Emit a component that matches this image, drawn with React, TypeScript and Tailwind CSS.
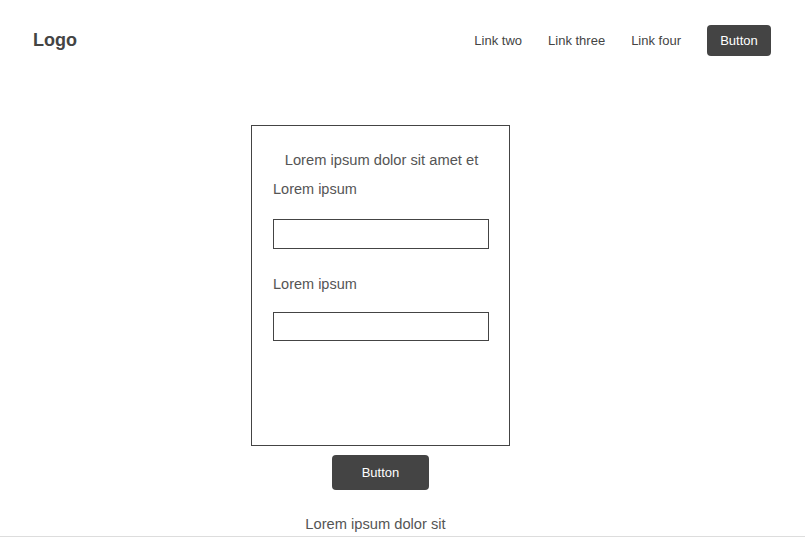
import type { FC } from "react";

const NavLink: FC<{ label: string }> = ({ label }) => (
    <a href="#" className="text-[13px] text-[#444]">
        {label}
    </a>
);

const Field: FC<{ label: string; className?: string }> = ({ label, className }) => (
    <div className={className}>
        <label className="block text-[14.5px] leading-[20px] text-[#555]">{label}</label>
    </div>
);

export default function App() {
    return (
        <div
            className="min-h-[537px] bg-white"
            style={{ fontFamily: '"Liberation Sans", Arial, sans-serif' }}
        >
            <header className="flex items-center justify-between h-[81px] pl-[33px] pr-[34px]">
                <span className="text-[18px] font-bold text-[#444]">Logo</span>
                <nav className="flex items-center gap-[26px]">
                    <NavLink label="Link two" />
                    <NavLink label="Link three" />
                    <NavLink label="Link four" />
                    <button className="w-[64px] h-[31px] rounded-[4px] bg-[#444] text-white text-[13px]">
                        Button
                    </button>
                </nav>
            </header>

            <main className="ml-[251px] w-[259px] mt-[44px] flex flex-col items-center">
                <form className="w-full h-[321px] border border-[#444] pt-[24px] px-[21px]">
                    <h1 className="text-center text-[14.7px] leading-[20px] text-[#555] pl-[2px] whitespace-nowrap">
                        Lorem ipsum dolor sit amet et
                    </h1>
                    <Field label="Lorem ipsum" className="mt-[9px]" />
                    <input
                        type="text"
                        className="mt-[20px] block w-[216px] h-[30px] border border-[#444] bg-white"
                    />
                    <Field label="Lorem ipsum" className="mt-[25px]" />
                    <input
                        type="text"
                        className="mt-[18px] block w-[216px] h-[29px] border border-[#444] bg-white"
                    />
                </form>
                <button
                    type="submit"
                    className="mt-[9px] w-[97px] h-[35px] rounded-[4px] bg-[#444] text-white text-[13px]"
                >
                    Button
                </button>
                <p className="mt-[24px] text-[14.7px] leading-[20px] text-[#555] pr-[10px] whitespace-nowrap">
                    Lorem ipsum dolor sit
                </p>
            </main>
            <footer className="mt-[2px] border-t border-[#ddd] h-[1px]" />
        </div>
    );
}
